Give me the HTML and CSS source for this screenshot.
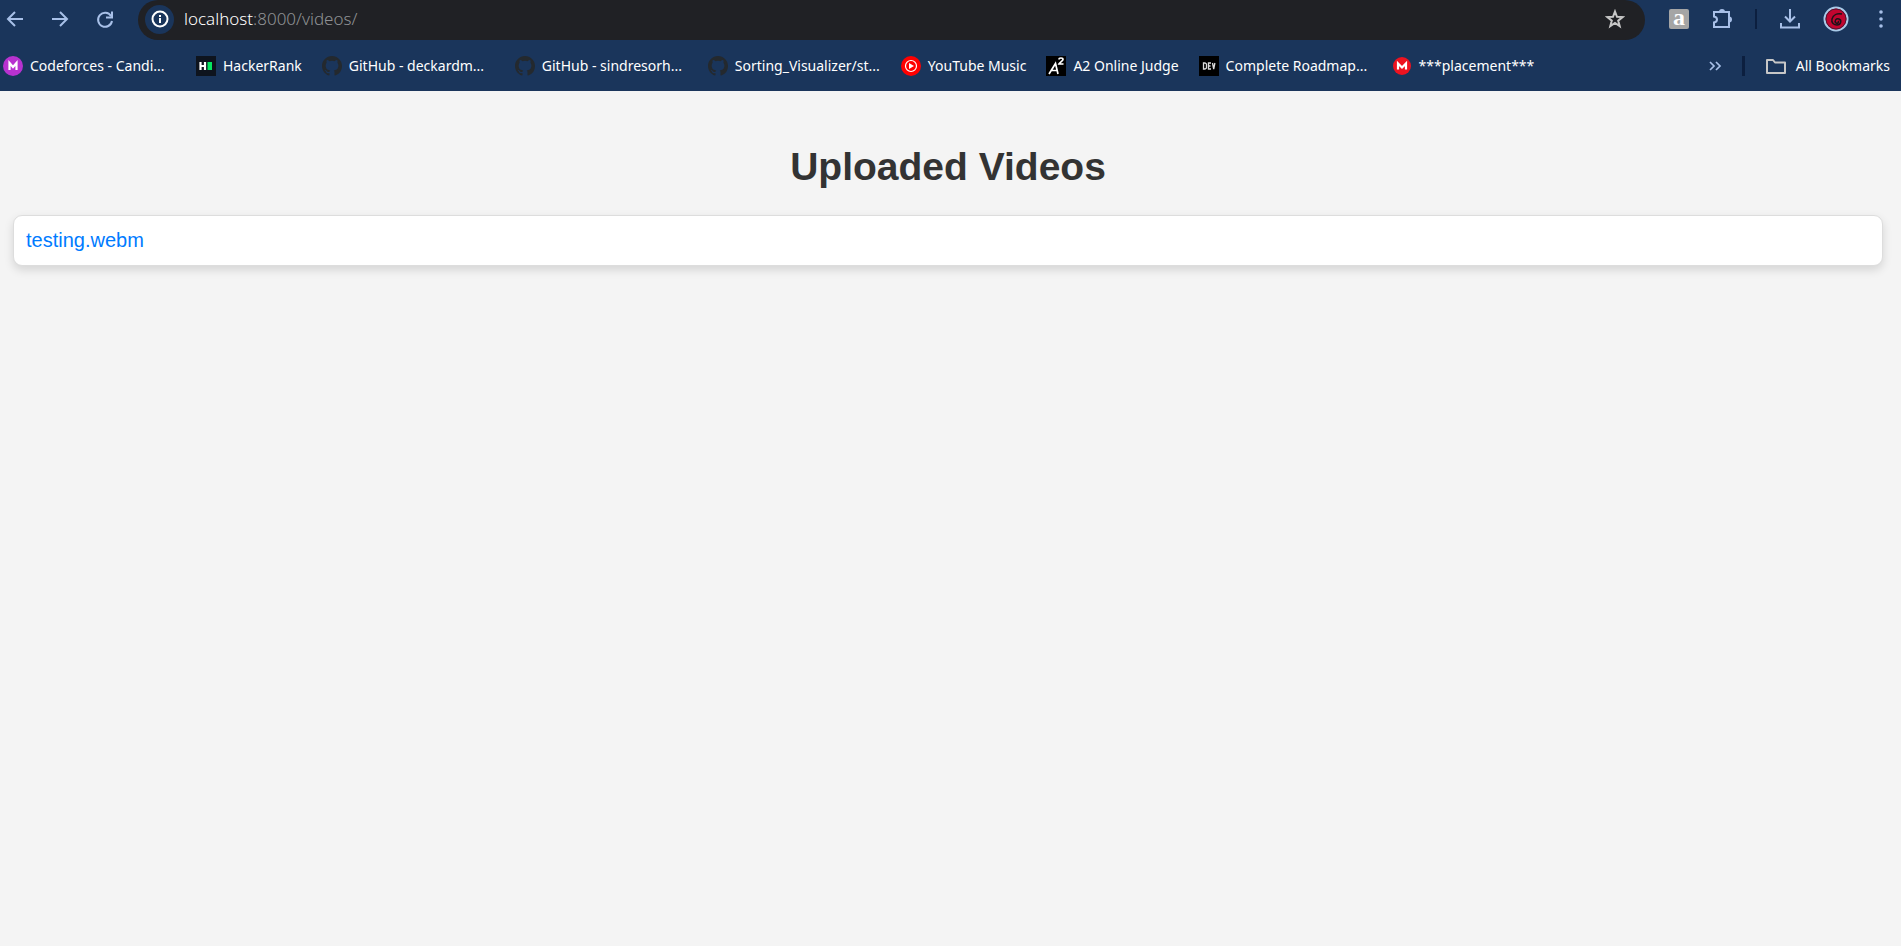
FILE: index.html
```
<!DOCTYPE html>
<html lang="en">
<head>
<meta charset="utf-8">
<title>Uploaded Videos</title>
<link rel="stylesheet" href="styles.css">
</head>
<body>
<svg class="defs" aria-hidden="true">
  <symbol id="octocat" viewBox="0 0 16 16"><path d="M8 0C3.58 0 0 3.58 0 8c0 3.54 2.29 6.53 5.47 7.59.4.07.55-.17.55-.38 0-.19-.01-.82-.01-1.49-2.01.37-2.53-.49-2.69-.94-.09-.23-.48-.94-.82-1.13-.28-.15-.68-.52-.01-.53.63-.01 1.08.58 1.23.82.72 1.21 1.87.87 2.33.66.07-.52.28-.87.51-1.07-1.78-.2-3.64-.89-3.64-3.95 0-.87.31-1.59.82-2.15-.08-.2-.36-1.02.08-2.12 0 0 .67-.21 2.2.82a7.6 7.6 0 0 1 4 0c1.53-1.04 2.2-.82 2.2-.82.44 1.1.16 1.92.08 2.12.51.56.82 1.27.82 2.15 0 3.07-1.87 3.75-3.65 3.95.29.25.54.73.54 1.48 0 1.07-.01 1.93-.01 2.2 0 .21.15.46.55.38A8 8 0 0 0 16 8c0-4.42-3.58-8-8-8z"/></symbol>
</svg>
<header class="browser">
  <div class="toolbar">
    <nav class="history" aria-label="History">
      <button class="tool" aria-label="Back"><svg width="20" height="20" viewBox="0 0 20 20"><path d="M18 10H4M10 3L3 10l7 7"/></svg></button>
      <button class="tool" aria-label="Forward"><svg width="20" height="20" viewBox="0 0 20 20"><path d="M2 10h14M10 3l7 7-7 7"/></svg></button>
      <button class="tool" aria-label="Reload"><svg width="20" height="20" viewBox="0 0 20 20"><path d="M16 7A7 7 0 1 0 17 12M17 2.500v6h-6"/></svg></button>
    </nav>
    <div class="address">
      <button class="site-info" aria-label="Site information"><svg width="18" height="18" viewBox="0 0 18 18"><circle cx="9" cy="9" r="7.500"/><path d="M9 8v5M9 5v2"/></svg></button>
      <a class="url" href="#"><span class="host">localhost</span>:8000/videos/</a>
      <button class="tool star" aria-label="Bookmark this tab"><svg width="20" height="20" viewBox="0 0 20 20"><path d="M10 2.500l2 5.300 5.600.300-4.400 3.500 1.500 5.500-4.700-3.100-4.700 3.100 1.500-5.500L2.400 8.100 8 7.800z"/></svg></button>
    </div>
    <div class="actions">
      <button class="tool"><span class="letter-a">a</span></button>
      <button class="tool" aria-label="Extensions"><svg width="22" height="22" viewBox="0 0 22 22"><path d="M3 4h15v15H3v-4.500c4-.5 4-5.500 0-6z"/><path class="solid" d="M8 4a3 3 0 0 1 6 0zM18 8.500a3 3 0 0 1 0 6z"/></svg></button>
      <span class="divider"></span>
      <button class="tool" aria-label="Downloads"><svg width="22" height="22" viewBox="0 0 22 22"><path d="M11 1v12M6 8.500l5 5 5-5M2 15v4.500h18V15"/></svg></button>
      <button class="tool" aria-label="Profile"><svg width="26" height="26" viewBox="0 0 26 26"><circle cx="13" cy="13" r="11.500" fill="#c3052f" stroke="#a9cbe8"/><circle cx="13" cy="13" r="10" stroke="#501733" stroke-width="1"/><path d="M19 8c-5-1-9 1-10 5-1 4 2 6 5 6 4 0 5-5 2-6-3-1-5 2-3 4 2 1 3-1 2-2" stroke="#1d1218" stroke-width="1.500"/></svg></button>
      <button class="tool" aria-label="Menu"><svg width="20" height="20" viewBox="0 0 20 20"><g class="solid"><circle cx="10" cy="3" r="1.800"/><circle cx="10" cy="10" r="1.800"/><circle cx="10" cy="17" r="1.800"/></g></svg></button>
    </div>
  </div>
  <nav class="bookmarks" aria-label="Bookmarks">
    <a class="bookmark long" href="#"><svg width="20" height="20" viewBox="0 0 20 20"><circle cx="10" cy="10" r="10" fill="#b832d0"/><path d="M6.500 14V7l3.500 4 3.500-4v7" fill="none" stroke="#fff" stroke-width="2.200"/></svg>Codeforces - Candi...</a>
    <a class="bookmark" href="#"><svg width="20" height="20" viewBox="0 0 20 20"><path fill="#0e141e" d="M0 0h20v20H0z"/><path d="M4.500 6v8M9 6v8M4.500 10H9" stroke="#fff" stroke-width="2.200"/><path fill="#05e660" d="M11.500 6H16v8h-4.500z"/></svg>HackerRank</a>
    <a class="bookmark long" href="#"><svg class="cat" width="20" height="20"><use href="#octocat"/></svg>GitHub - deckardm...</a>
    <a class="bookmark long" href="#"><svg class="cat" width="20" height="20"><use href="#octocat"/></svg>GitHub - sindresorh...</a>
    <a class="bookmark long" href="#"><svg class="cat" width="20" height="20"><use href="#octocat"/></svg>Sorting_Visualizer/st...</a>
    <a class="bookmark" href="#"><svg width="20" height="20" viewBox="0 0 20 20"><circle cx="10" cy="10" r="10" fill="#f00"/><circle cx="10" cy="10" r="5.500" fill="none" stroke="#fff" stroke-width="1.200"/><path fill="#fff" d="M8 7l5 3-5 3z"/></svg>YouTube Music</a>
    <a class="bookmark" href="#"><svg width="20" height="20" viewBox="0 0 20 20"><path d="M0 0h20v20H0z"/><path d="M3 18L9.500 7.500 12 18M5.500 14.500H11M13 3.500c0-2 4-2 4 0 0 1.500-3 2.500-4 4.500h4.500" fill="none" stroke="#fff" stroke-width="1.700"/></svg>A2 Online Judge</a>
    <a class="bookmark long" href="#"><svg width="20" height="20" viewBox="0 0 20 20"><path d="M0 0h20v20H0z"/><path d="M4.500 7v6H6l1.500-1V8L6 7zM12 7H9.500v6H12M9.500 10h2M13.500 7l1.200 6 1.200-6" fill="none" stroke="#ddd" stroke-width="1.300"/></svg>Complete Roadmap...</a>
    <a class="bookmark" href="#"><svg width="20" height="20" viewBox="0 0 20 20"><circle cx="10" cy="10" r="9" fill="#ed1320"/><path d="M6 13.500V7.500l4 4 4-4v6" fill="none" stroke="#fff" stroke-width="2.200"/></svg>***placement***</a>
    <div class="bookmark-end">
      <button class="tool" aria-label="More bookmarks"><svg width="14" height="14" viewBox="0 0 14 14"><path d="M2 3l4 4-4 4M8 3l4 4-4 4" stroke-width="1.700"/></svg></button>
      <span class="divider thick"></span>
      <a class="bookmark" href="#"><svg class="folder" width="22" height="20" viewBox="0 0 22 20"><path d="M2 4h6l2 2.500h10V17H2z" stroke-linejoin="round"/></svg>All Bookmarks</a>
    </div>
  </nav>
</header>
<main class="page">
  <h1 class="title">Uploaded Videos</h1>
  <ul class="videos">
    <li class="video"><a class="video-link" href="#">testing.webm</a></li>
  </ul>
</main>
</body>
</html>
```
FILE: styles.css
```
* { box-sizing: border-box; }
body {
  margin: 0;
  min-height: 100vh;
  background: #f4f4f4;
  font-family: "Liberation Sans", Arial, sans-serif;
}
.defs { display: none; }
.browser {
  background: #1a355b;
  color: #fff;
  font-family: "Noto Sans", "Open Sans", sans-serif;
}
.toolbar { display: flex; align-items: flex-start; height: 40px; }
button {
  border: 0;
  padding: 0;
  background: none;
  color: inherit;
  font: inherit;
}
.tool {
  display: flex;
  align-items: center;
  justify-content: center;
  color: #a8c0e8;
}
.tool svg, .site-info svg, .folder {
  fill: none;
  stroke: currentColor;
  stroke-width: 2;
}
.tool .solid { fill: currentColor; stroke: none; }
.history {
  display: flex;
  align-items: center;
  gap: 25px;
  height: 38px;
  padding: 0 23px 0 5px;
}
.address {
  display: flex;
  flex: 1;
  align-items: center;
  height: 40px;
  padding: 0 20px 2px 7px;
  border-radius: 20px;
  background: #202125;
}
.site-info {
  display: flex;
  align-items: center;
  justify-content: center;
  width: 29px;
  height: 29px;
  border-radius: 50%;
  background: #1a355b;
}
.url {
  flex: 1;
  margin-left: 10px;
  color: #8f9194;
  font-size: 17px;
  font-weight: 300;
  line-height: 24px;
  text-decoration: none;
}
.host { color: #fff; }
.star { color: #c7c7c7; }
.actions {
  display: flex;
  align-items: center;
  gap: 22px;
  height: 38px;
  padding: 0 10px 0 24px;
}
.letter-a {
  width: 20px;
  height: 20px;
  border-radius: 2px;
  background: #a5a5a5;
  color: #fff;
  font: bold 24px/16px "Liberation Serif", serif;
}
.divider { width: 2px; height: 20px; background: #0c1f3f; }
.divider.thick { width: 3px; }
.bookmarks {
  display: flex;
  align-items: center;
  height: 51px;
  padding: 0 11px 0 3px;
}
.bookmark {
  display: flex;
  align-items: center;
  gap: 7px;
  margin-right: 20px;
  color: #fff;
  font-size: 14px;
  line-height: 20px;
  text-decoration: none;
  white-space: nowrap;
}
.bookmark.long { width: 173px; }
.bookmark svg { flex: none; }
.cat { fill: #24292e; }
.bookmark-end { display: flex; align-items: center; gap: 20px; margin-left: auto; }
.bookmark-end .bookmark { gap: 9px; margin: 0; }
.folder { color: #c7c7c7; }
.page { padding: 52px 18px 0 13px; }
.title {
  margin: 0 0 25px;
  color: #333;
  font-size: 39px;
  line-height: 47px;
  text-align: center;
}
.videos { margin: 0; padding: 0; list-style: none; }
.video {
  padding: 12px;
  border: 1px solid #ddd;
  border-radius: 9px;
  background: #fff;
  box-shadow: 0 4px 10px rgba(0, 0, 0, 0.13);
}
.video-link {
  display: block;
  color: #007bff;
  font-size: 20px;
  line-height: 25px;
  text-decoration: none;
}
```
